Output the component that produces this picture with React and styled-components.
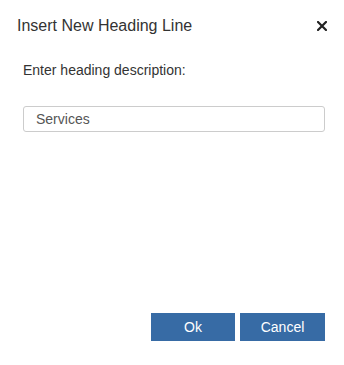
import React from "react";
import styled, { createGlobalStyle } from "styled-components";

const Global = createGlobalStyle`
  html, body { margin: 0; padding: 0; background: #fff; }
  body { font-family: "Liberation Sans", Arial, sans-serif; }
`;

const Dialog = styled.div`
  width: 344px;
  height: 365px;
  box-sizing: border-box;
  background: #fff;
  display: flex;
  flex-direction: column;
`;

const Header = styled.div`
  display: flex;
  align-items: center;
  justify-content: space-between;
  padding: 17px 16px 0 17px;
  height: 18px;
`;

const Title = styled.h1`
  margin: 0;
  font-size: 16px;
  font-weight: normal;
  line-height: 18px;
  color: #333;
`;

const Close = styled.button`
  border: 0;
  background: none;
  padding: 0;
  width: 12px;
  height: 12px;
  display: flex;
  align-items: center;
  justify-content: center;
  cursor: pointer;
`;

const Body = styled.div`
  padding: 27px 19px 0 23px;
  display: flex;
  flex-direction: column;
  flex: 1;
`;

const Label = styled.label`
  font-size: 14px;
  line-height: 16px;
  color: #333;
`;

const Input = styled.input`
  margin-top: 28px;
  box-sizing: border-box;
  width: 302px;
  height: 26px;
  border: 1px solid #ccc;
  border-radius: 3px;
  padding: 0 12px;
  font-family: "Liberation Sans", Arial, sans-serif;
  font-size: 14px;
  color: #555;
  outline: none;
`;

const Footer = styled.div`
  display: flex;
  justify-content: flex-end;
  gap: 5px;
  padding: 0 19px 24px 0;
`;

const Button = styled.button`
  width: ${(p) => p.w}px;
  height: 28px;
  border: 0;
  background: #376ba5;
  color: #fff;
  font-family: "Liberation Sans", Arial, sans-serif;
  font-size: 14px;
  padding: 0;
  cursor: pointer;
`;

export default function App() {
  return (
    <>
      <Global />
      <Dialog>
        <Header>
          <Title>Insert New Heading Line</Title>
          <Close aria-label="Close">
            <svg width="10" height="10" viewBox="0 0 10 10">
              <path d="M1 1 L9 9 M9 1 L1 9" stroke="#222" strokeWidth="2.2" strokeLinecap="square" />
            </svg>
          </Close>
        </Header>
        <Body>
          <Label>Enter heading description:</Label>
          <Input defaultValue="Services" />
        </Body>
        <Footer>
          <Button w={84}>Ok</Button>
          <Button w={85}>Cancel</Button>
        </Footer>
      </Dialog>
    </>
  );
}
